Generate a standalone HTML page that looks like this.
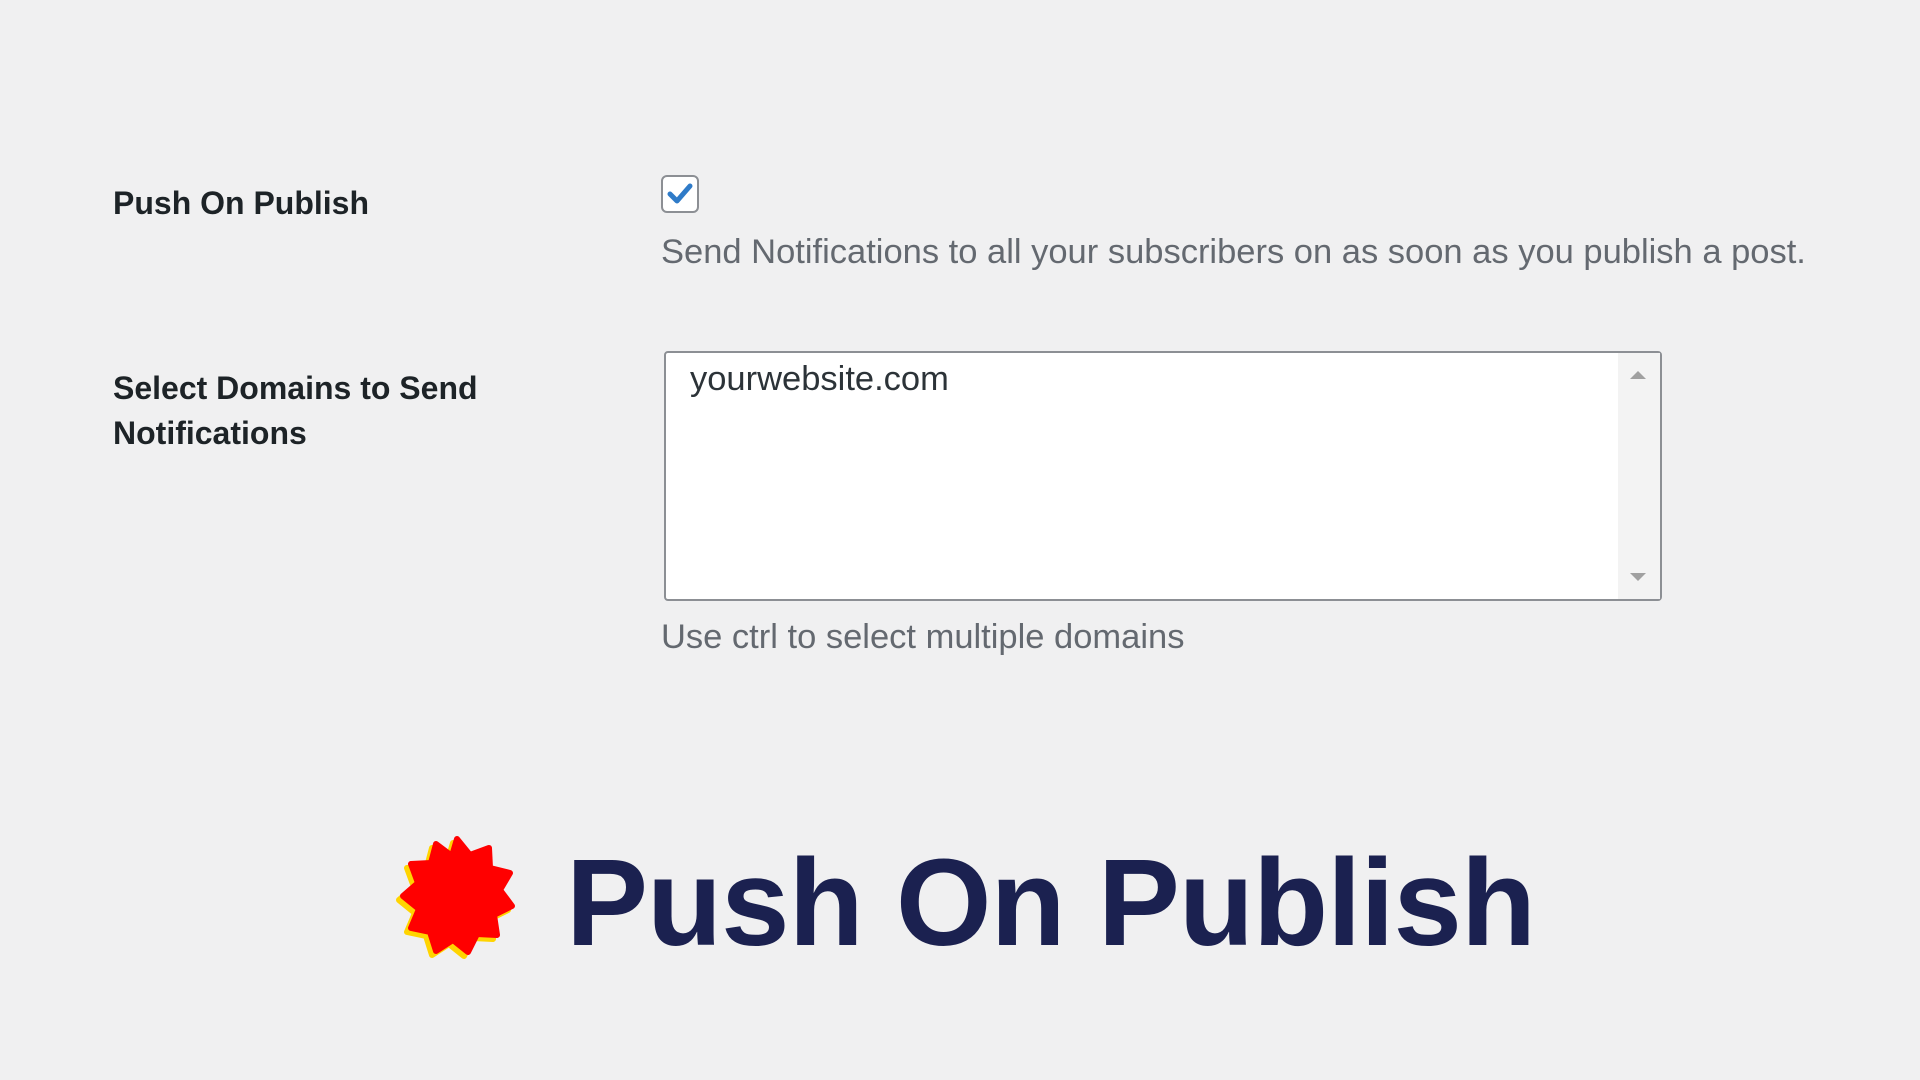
<!DOCTYPE html>
<html><head><meta charset="utf-8"><style>
html,body{margin:0;padding:0;width:1920px;height:1080px;background:#f0f0f1;overflow:hidden;font-family:"Liberation Sans",sans-serif;}
.abs{position:absolute;}
.lbl{color:#1d2327;font-weight:bold;font-size:32px;line-height:45px;}
.desc{color:#646970;font-size:34.5px;line-height:40px;white-space:nowrap;}
</style></head><body>
<div class="abs lbl" style="left:113px;top:181px;">Push On Publish</div>
<div class="abs" style="left:661px;top:175px;width:34px;height:34px;border:2px solid #8c8f94;border-radius:6px;background:#fff;">
<svg width="34" height="34" viewBox="0 0 34 34"><path d="M7 17 L14 24 L27 9" fill="none" stroke="#2f7bc8" stroke-width="5" stroke-linecap="round" stroke-linejoin="round"/></svg></div>
<div class="abs desc" style="left:661px;top:232px;">Send Notifications to all your subscribers on as soon as you publish a post.</div>

<div class="abs lbl" style="left:113px;top:366px;">Select Domains to Send<br>Notifications</div>
<div class="abs" style="left:664px;top:351px;width:994px;height:246px;border:2px solid #8c8f94;border-radius:4px;background:#fff;">
<div class="abs" style="left:24px;top:5px;font-size:34.5px;color:#2c3338;line-height:42px;">yourwebsite.com</div>
<div class="abs" style="right:0;top:0;width:42px;height:246px;background:#f3f3f3;"></div>
<div class="abs" style="right:14px;top:18px;width:0;height:0;border-left:8px solid transparent;border-right:8px solid transparent;border-bottom:8px solid #a0a0a0;"></div>
<div class="abs" style="right:14px;bottom:18px;width:0;height:0;border-left:8px solid transparent;border-right:8px solid transparent;border-top:8px solid #a0a0a0;"></div>
</div>
<div class="abs desc" style="left:661px;top:617px;">Use ctrl to select multiple domains</div>

<svg class="abs" style="left:390px;top:830px;" width="140" height="140" viewBox="0 0 140 140">
<polygon transform="translate(63,71)" fill="#ffd400" stroke="#ffd400" stroke-width="6" stroke-linejoin="round" points="0,-58 13,-42 32,-49 33,-29 53,-24 43,-7 55,9 37,18 40,38 20,37 11,55 -4,43 -21,54 -27,35 -46,31 -38,12 -54,-1 -39,-14 -46,-33 -26,-34 -21,-53 -5,-41"/>
<polygon transform="translate(67,67)" fill="#ff0000" stroke="#ff0000" stroke-width="6" stroke-linejoin="round" points="0,-58 13,-42 32,-49 33,-29 53,-24 43,-7 55,9 37,18 40,38 20,37 11,55 -4,43 -21,54 -27,35 -46,31 -38,12 -54,-1 -39,-14 -46,-33 -26,-34 -21,-53 -5,-41"/>
</svg>
<div class="abs" style="left:566px;top:834px;font-size:123px;font-weight:bold;color:#1b2150;line-height:140px;white-space:nowrap;letter-spacing:-1px;">Push On Publish</div>
</body></html>
